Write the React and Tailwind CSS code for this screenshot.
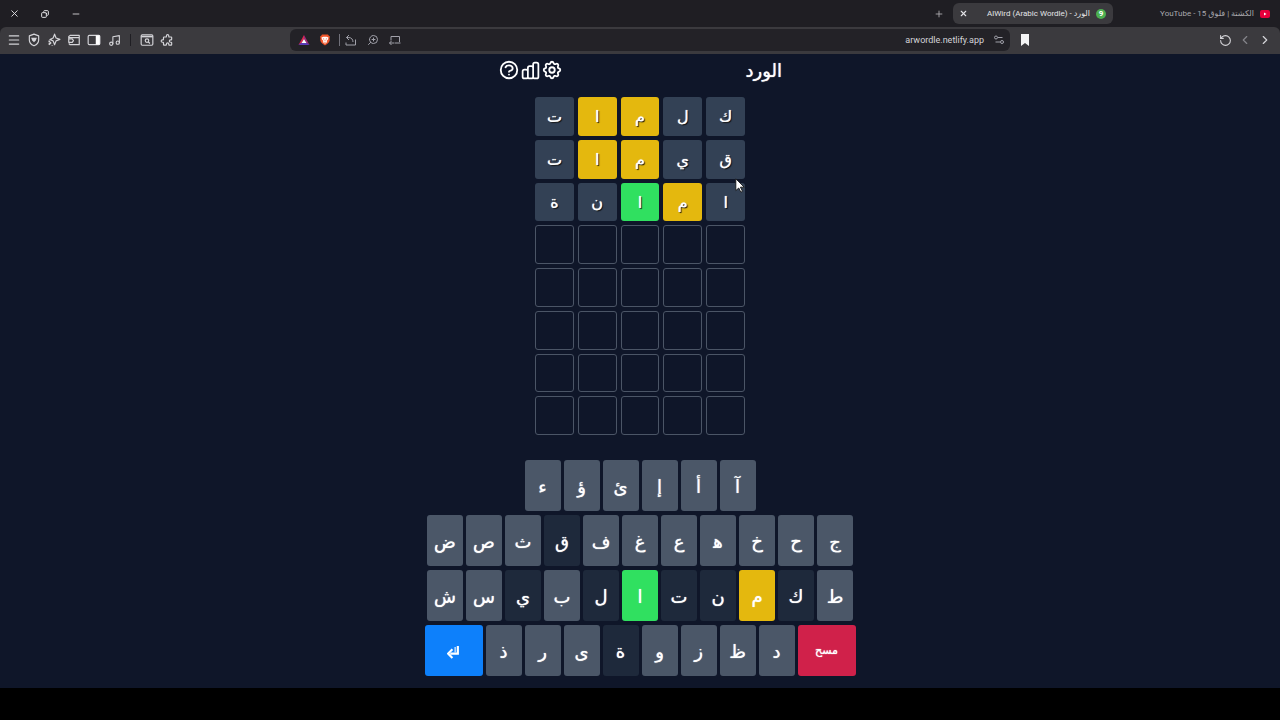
import React from 'react';
import {
    X, Copy, Minus, Menu, Music, ZoomIn, Plus, RotateCcw, ChevronLeft, ChevronRight,
} from 'lucide-react';
import { HiOutlineChartBar, HiOutlineCog, HiOutlinePuzzle, HiOutlineQuestionMarkCircle } from 'react-icons/hi';

const tileColors = {
    absent: 'bg-[#334155]',
    present: 'bg-[#e4b80e]',
    correct: 'bg-[#30e060]',
    empty: 'border border-[#4b5566]',
};

const keyColors = {
    absent: 'bg-[#1e293b]',
    present: 'bg-[#e4b80e]',
    correct: 'bg-[#30e060]',
    unused: 'bg-[#4b5768]',
};

const guesses = [
    { word: 'كلمات', marks: ['absent', 'absent', 'present', 'present', 'absent'] },
    { word: 'قيمات', marks: ['absent', 'absent', 'present', 'present', 'absent'] },
    { word: 'امانة', marks: ['absent', 'present', 'correct', 'absent', 'absent'] },
];

const ROWS = 8;
const COLS = 5;

const keyRows = [
    ['آ', 'أ', 'إ', 'ئ', 'ؤ', 'ء'],
    ['ج', 'ح', 'خ', 'ه\u200d', 'ع', 'غ', 'ف', 'ق', 'ث', 'ص', 'ض'],
    ['ط', 'ك', 'م', 'ن', 'ت', 'ا', 'ل', 'ب', 'ي', 'س', 'ش'],
    ['د', 'ظ', 'ز', 'و', 'ة', 'ى', 'ر', 'ذ'],
];

const keyStatus = {
    ق: 'absent', ك: 'absent', م: 'present', ن: 'absent', ت: 'absent',
    ا: 'correct', ل: 'absent', ي: 'absent', ة: 'absent',
};

const IconButton = ({ label, className = '', children }) => (
    <button type="button" aria-label={label} className={`flex items-center justify-center ${className}`}>
        {children}
    </button>
);

const BraveIcon = () => (
    <svg viewBox="0 0 24 24" className="size-3">
        <path d="M6 1h12l2 3 2 1-1 4 .5 3c-.6 4-3 7-9.500 11C5.500 19 3.100 16 2.500 12L3 9 2 5l2-1z" fill="#f0562b" />
        <path d="M5 7l4-1.500h6L19 7l-1 4-3 3 1.500 2-4.500 3.500L7.500 16 9 14l-3-3z" fill="#fff" />
        <path d="M7.500 8.500l3 .8-.8 2.200zM16.500 8.500l-3 .8.800 2.200zM12 10l1 4.500h-2zM9.500 16h5L12 17.500z" fill="#f0562b" />
    </svg>
);

const BatIcon = () => (
    <svg viewBox="0 0 24 24" className="size-3">
        <path d="M12 2v8l-5 8-6 4z" fill="#e0284f" />
        <path d="M12 2l11 20-6-4-5-8z" fill="#a0287a" />
        <path d="M1 22h22l-6-4.500H7z" fill="#5a3bb8" />
        <path d="M12 10l5 8H7z" fill="#fff" />
    </svg>
);

const LineIcon = ({ className = 'size-[14px]', children }) => (
    <svg viewBox="0 0 24 24" className={className} fill="none" stroke="currentColor" strokeWidth="2" strokeLinejoin="round">
        {children}
    </svg>
);

const TabStrip = () => (
    <div className="grid h-[27px] grid-cols-[953fr_160fr_167fr] items-center text-[8px]">
        <div className="flex items-center justify-between pr-2 pl-2">
            <div className="flex items-center gap-[19px] text-[#e4e4e7]">
                <IconButton label="إغلاق" className="size-3"><X className="size-[11px]" /></IconButton>
                <IconButton label="استعادة" className="size-3"><Copy className="size-2 rotate-90" strokeWidth={3} /></IconButton>
                <IconButton label="تصغير" className="size-3"><Minus className="size-[10px]" /></IconButton>
            </div>
            <IconButton label="علامة تبويب جديدة" className="size-3 text-[#b4b4b8]"><Plus className="size-[10px]" /></IconButton>
        </div>
        <div className="flex h-[21px] items-center rounded-md bg-[#3b3a3e] pr-[7px] pl-1 text-[#e4e4e7]">
            <IconButton label="إغلاق علامة التبويب" className="size-3"><X className="size-[9px]" strokeWidth={3} /></IconButton>
            <span dir="rtl" className="flex flex-1 items-center gap-[6px] whitespace-nowrap">
                <span className="flex size-[10px] items-center justify-center rounded-full bg-[#4caf50] font-bold text-white">9</span>
                <span>الورد - <bdi>AlWird (Arabic Wordle)</bdi></span>
            </span>
        </div>
        <div dir="rtl" className="flex items-center gap-[6px] pr-[10px] whitespace-nowrap text-[#a9a9ae]">
            <svg viewBox="0 0 20 16" className="h-2 w-[10px]">
                <rect width="20" height="16" rx="4" fill="#e6003c" />
                <path d="M8 5l5 3-5 3z" fill="#fff" />
            </svg>
            <span>الكشتة | فلوق 15 - <bdi>YouTube</bdi></span>
        </div>
    </div>
);

const Toolbar = () => (
    <div className="grid h-[27px] grid-cols-[290fr_720fr_270fr] items-center rounded-t-md bg-[#3b3a3e] pb-px text-[#d4d4d8]">
        <div className="flex items-center gap-[6px] pl-[7px]">
            <IconButton label="القائمة" className="size-[14px]"><Menu className="size-[14px]" /></IconButton>
            <IconButton label="الحماية" className="size-[14px]">
                <LineIcon>
                    <path d="M12 2l8 3v7c0 5-3.500 8-8 10-4.500-2-8-5-8-10V5z" />
                    <path d="M7 8h10l-2 5-3 3-3-3z" fill="currentColor" stroke="none" />
                </LineIcon>
            </IconButton>
            <IconButton label="المساعد" className="size-[14px]">
                <LineIcon>
                    <path d="M13 2l2.500 6.500L22 11l-6.500 2.500L13 20l-2.500-6.500L5 11l5.500-2.500z" />
                    <path d="M7 16l-4 4M4 13v3M9 21v1" strokeWidth="3" />
                </LineIcon>
            </IconButton>
            <IconButton label="المحفظة" className="size-[14px]">
                <LineIcon>
                    <path d="M3 10V6l3-2h15v16H5l-2-2M3 8h18" />
                    <path d="M3 10h6l2 3-2 3H3z" />
                </LineIcon>
            </IconButton>
            <IconButton label="الشريط الجانبي" className="size-[14px]">
                <LineIcon>
                    <rect x="2" y="4" width="20" height="16" rx="2" />
                    <path d="M15 4h7v16h-7z" fill="#fff" stroke="none" />
                </LineIcon>
            </IconButton>
            <IconButton label="الموسيقى" className="size-[14px]"><Music className="size-[13px]" /></IconButton>
            <span className="mx-[3px] h-3 w-px bg-[#1f1e23]" />
            <IconButton label="بحث علامات التبويب" className="size-[14px]">
                <LineIcon>
                    <rect x="2" y="3" width="20" height="18" rx="2" />
                    <path d="M2 6h20" strokeWidth="3" />
                    <circle cx="12" cy="13" r="3" />
                    <path d="M14 15l3 3" />
                </LineIcon>
            </IconButton>
            <IconButton label="الإضافات" className="size-[14px]"><HiOutlinePuzzle className="size-[15px]" /></IconButton>
        </div>
        <div className="flex h-[22px] items-center justify-between rounded-md bg-[#232227] pr-[5px] pl-2 text-[#a1a1aa]">
            <div className="flex items-center">
                <IconButton label="المكافآت"><BatIcon /></IconButton>
                <IconButton label="دروع" className="ml-[9px]"><BraveIcon /></IconButton>
                <span className="mr-[5px] ml-2 h-3 w-px bg-[#71717a]" />
                <IconButton label="مشاركة">
                    <LineIcon className="size-3"><path d="M8 2L3 7l5 5M3 7h4c6 0 9 4 9 9M2 17v5h19V11" /></LineIcon>
                </IconButton>
                <IconButton label="تكبير" className="ml-[10px]"><ZoomIn className="size-3 -scale-x-100" /></IconButton>
                <IconButton label="إرسال" className="ml-[10px]">
                    <LineIcon className="size-3"><path d="M4 13V5h17v11M11 18h12M1 18h9M5 14l-4 4 4 4" /></LineIcon>
                </IconButton>
            </div>
            <div className="flex items-center gap-[9px]">
                <span className="pt-px text-[9px] text-[#d4d4d8]">arwordle.netlify.app</span>
                <IconButton label="معلومات الموقع">
                    <LineIcon className="size-3">
                        <circle cx="6" cy="7" r="3" />
                        <circle cx="18" cy="16" r="3" />
                        <path d="M10 7h9M5 16h9" />
                    </LineIcon>
                </IconButton>
            </div>
        </div>
        <div className="flex items-center justify-between pr-2 pl-[10px]">
            <IconButton label="إشارة مرجعية">
                <svg viewBox="0 0 10 12" className="h-3 w-[10px]"><path d="M1 0h8v12L5 9l-4 3z" fill="#f4f4f5" /></svg>
            </IconButton>
            <div className="flex items-center gap-[6px]">
                <IconButton label="تحديث" className="size-[14px]"><RotateCcw className="size-[13px]" /></IconButton>
                <IconButton label="التالي" className="size-[14px] text-[#85858a]"><ChevronLeft className="size-[18px]" /></IconButton>
                <IconButton label="رجوع" className="size-[14px]"><ChevronRight className="size-[18px]" /></IconButton>
            </div>
        </div>
    </div>
);

const Header = () => (
    <header className="mx-auto flex h-8 w-full max-w-[284px] items-center justify-between">
        <h1 className="pt-0.5 text-lg text-shadow-[0_0_1px_#ffffff]">الورد</h1>
        <div className="flex items-center">
            <IconButton label="الإعدادات"><HiOutlineCog className="size-[22px]" /></IconButton>
            <IconButton label="الإحصائيات"><HiOutlineChartBar className="size-[21px]" /></IconButton>
            <IconButton label="المساعدة"><HiOutlineQuestionMarkCircle className="size-[22px]" /></IconButton>
        </div>
    </header>
);

const Board = () => (
    <div className="mx-auto mt-[11px] grid h-[338px] w-[210px] grid-cols-5 grid-rows-8 gap-1">
        {Array.from({ length: ROWS * COLS }, (_, i) => {
            const guess = guesses[Math.floor(i / COLS)];
            const col = i % COLS;
            return (
                <div
                    key={i}
                    className={`flex items-center justify-center rounded-[3px] pt-0.5 text-base text-shadow-[0_0_1px_#ffffff,1px_1px_1px_#000000] ${tileColors[guess ? guess.marks[col] : 'empty']}`}
                >
                    {guess?.word[col]}
                </div>
            );
        })}
    </div>
);

const Keyboard = () => (
    <div className="mt-[25px] flex flex-col gap-1">
        {keyRows.map((row, i) => (
            <div key={i} className="flex justify-center gap-[3px]">
                {i === 3 && (
                    <button type="button" className="h-[51px] w-[58px] rounded-[3px] bg-[#d0214a] pt-0.5 text-[11px] text-shadow-[0_0_1px_#ffffff]">مسح</button>
                )}
                {row.map((letter) => (
                    <button
                        key={letter}
                        type="button"
                        className={`h-[51px] w-9 rounded-[3px] pt-0.5 text-lg text-shadow-[0_0_1px_#ffffff] ${keyColors[keyStatus[letter] || 'unused']}`}
                    >
                        {letter}
                    </button>
                ))}
                {i === 3 && (
                    <button type="button" aria-label="إدخال" className="flex h-[51px] w-[58px] items-center justify-center rounded-[3px] bg-[#0d80fb]">
                        <svg viewBox="0 0 12 12" className="mt-1 size-[13px]" fill="none" stroke="currentColor">
                            <path d="M10 0v7H3" strokeWidth="2" />
                            <path d="M7.500 1v5" />
                            <path d="M5 3L1 7l4 4" strokeWidth="2" />
                        </svg>
                    </button>
                )}
            </div>
        ))}
    </div>
);

const App = () => (
    <div className="flex min-h-screen flex-col bg-black">
        <div className="bg-[#1f1e23] font-[Roboto,'DejaVu_Sans',sans-serif]">
            <TabStrip />
            <Toolbar />
        </div>
        <main dir="rtl" className="relative bg-[#0f1629] pb-3 font-['DejaVu_Sans',sans-serif] text-white">
            <Header />
            <Board />
            <Keyboard />
            <svg viewBox="0 0 12 18" className="absolute top-[124px] left-[calc(50%+95px)] h-[15px] w-[10px]">
                <path d="M1 1v14l3.500-3 2.500 5 2-1-2.500-5H11z" fill="#fff" stroke="#111" />
            </svg>
        </main>
    </div>
);

export default App;
